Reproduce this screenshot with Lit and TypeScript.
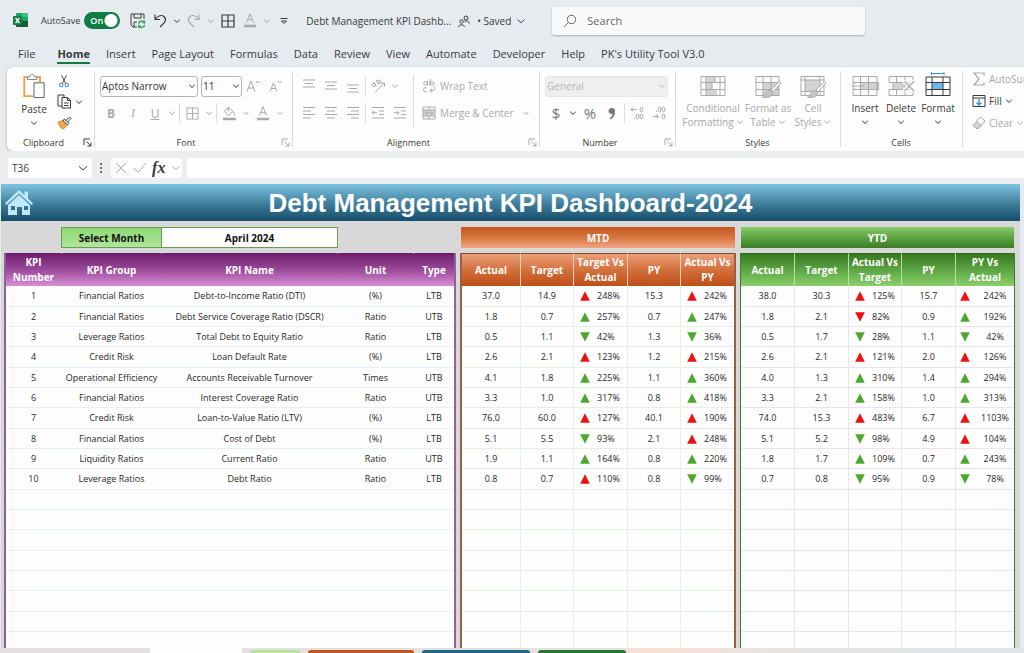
import { LitElement, html, css, svg, nothing } from "lit";
import { customElement, property } from "lit/decorators.js";
import { classMap } from "lit/directives/class-map.js";

type Trend = { dir: "up" | "down"; tone: "red" | "green"; value: string };
type Cell = string | Trend;
type Column = { title: string; width: number; centred?: boolean };

const trend = (code: string, value: string): Trend => ({
  tone: code[0] === "r" ? "red" : "green",
  dir: code[1] === "u" ? "up" : "down",
  value,
});

const KPI_COLUMNS: Column[] = [
  { title: "KPI Number", width: 56 },
  { title: "KPI Group", width: 100 },
  { title: "KPI Name", width: 176 },
  { title: "Unit", width: 76 },
  { title: "Type", width: 40 },
];
const MTD_COLUMNS: Column[] = [
  { title: "Actual", width: 59 },
  { title: "Target", width: 53 },
  { title: "Target Vs Actual", width: 54 },
  { title: "PY", width: 53 },
  { title: "Actual Vs PY", width: 53 },
];
const YTD_COLUMNS: Column[] = [
  { title: "Actual", width: 54 },
  { title: "Target", width: 54 },
  { title: "Actual Vs Target", width: 53 },
  { title: "PY", width: 54 },
  { title: "PY Vs Actual", width: 58, centred: true },
];

const KPI_ROWS: Cell[][] = [
  ["1", "Financial Ratios", "Debt-to-Income Ratio (DTI)", "(%)", "LTB"],
  ["2", "Financial Ratios", "Debt Service Coverage Ratio (DSCR)", "Ratio", "UTB"],
  ["3", "Leverage Ratios", "Total Debt to Equity Ratio", "Ratio", "LTB"],
  ["4", "Credit Risk", "Loan Default Rate", "(%)", "LTB"],
  ["5", "Operational Efficiency", "Accounts Receivable Turnover", "Times", "UTB"],
  ["6", "Financial Ratios", "Interest Coverage Ratio", "Ratio", "UTB"],
  ["7", "Credit Risk", "Loan-to-Value Ratio (LTV)", "(%)", "LTB"],
  ["8", "Financial Ratios", "Cost of Debt", "(%)", "LTB"],
  ["9", "Liquidity Ratios", "Current Ratio", "Ratio", "UTB"],
  ["10", "Leverage Ratios", "Debt Ratio", "Ratio", "LTB"],
];
const MTD_ROWS: Cell[][] = [
  ["37.0", "14.9", trend("ru", "248%"), "15.3", trend("ru", "242%")],
  ["1.8", "0.7", trend("gu", "257%"), "0.7", trend("gu", "247%")],
  ["0.5", "1.1", trend("gd", "42%"), "1.3", trend("gd", "36%")],
  ["2.6", "2.1", trend("ru", "123%"), "1.2", trend("ru", "215%")],
  ["4.1", "1.8", trend("gu", "225%"), "1.1", trend("gu", "360%")],
  ["3.3", "1.0", trend("gu", "317%"), "0.8", trend("gu", "418%")],
  ["76.0", "60.0", trend("ru", "127%"), "40.1", trend("ru", "190%")],
  ["5.1", "5.5", trend("gd", "93%"), "2.1", trend("ru", "248%")],
  ["1.9", "1.1", trend("gu", "164%"), "0.8", trend("gu", "220%")],
  ["0.8", "0.7", trend("ru", "110%"), "0.8", trend("gd", "99%")],
];
const YTD_ROWS: Cell[][] = [
  ["38.0", "30.3", trend("ru", "125%"), "15.7", trend("ru", "242%")],
  ["1.8", "2.1", trend("rd", "82%"), "0.9", trend("gu", "192%")],
  ["0.5", "1.7", trend("gd", "28%"), "1.1", trend("gd", "42%")],
  ["2.6", "2.1", trend("ru", "121%"), "2.0", trend("ru", "126%")],
  ["4.0", "1.3", trend("gu", "310%"), "1.4", trend("gu", "294%")],
  ["3.3", "2.1", trend("gu", "158%"), "1.0", trend("gu", "313%")],
  ["74.0", "15.3", trend("ru", "483%"), "6.7", trend("ru", "1103%")],
  ["5.1", "5.2", trend("gd", "98%"), "4.9", trend("ru", "104%")],
  ["1.8", "1.7", trend("gu", "109%"), "0.7", trend("gu", "243%")],
  ["0.7", "0.8", trend("gd", "95%"), "0.9", trend("gd", "78%")],
];

@customElement("kpi-table")
export class KpiTable extends LitElement {
  @property({ attribute: false }) columns: Column[] = [];
  @property({ attribute: false }) rows: Cell[][] = [];
  @property({ type: Number }) blank = 8;
  @property({ reflect: true }) tone = "purple";

  static styles = css`
    :host {
      display: block;
      box-sizing: border-box;
      border: 2px solid var(--edge);
      border-width: 0 2px;
      background: #fefefe;
      --edge: #93619a;
      --top: #641a63;
      --head: linear-gradient(#6e1f6d, #9c4a9b 50%, #d88fd6);
      --line: #e3f0f6;
      --rule: transparent;
      --divide: transparent;
    }
    :host([tone="orange"]) {
      --edge: #9a5f4a;
      --top: #7d4a2c;
      --head: linear-gradient(#eb9f7a, #d3703c 50%, #bd4f17);
      --line: #e3f2dc;
      --rule: #e3f2dc;
      --divide: #f6cdb6;
    }
    :host([tone="green"]) {
      border-width: 0 1px;
      --edge: #3b7d23;
      --top: #2f6a1a;
      --head: linear-gradient(#37781f, #5da544 50%, #8ad06c);
      --line: #f1e0f2;
      --rule: #f1e0f2;
      --divide: #b9dfa9;
    }
    table {
      width: 100%;
      table-layout: fixed;
      border-collapse: separate;
      border-spacing: 0;
      font-size: 9px;
      color: #262626;
    }
    th,
    td {
      box-sizing: border-box;
      padding: 0;
      text-align: center;
      vertical-align: middle;
      white-space: nowrap;
    }
    th {
      height: 33px;
      line-height: 15px;
      font-size: 10px;
      font-weight: 700;
      white-space: normal;
      color: #fff;
      background: var(--head);
      border-top: 1px solid var(--top);
      border-right: 1px solid var(--divide);
    }
    td {
      height: 20px;
      line-height: 16px;
      border-bottom: 1px solid var(--line);
      border-right: 1px solid var(--rule);
    }
    tr:nth-child(3n + 1) td {
      height: 21px;
    }
    th:last-child,
    td:last-child {
      border-right: 0;
    }
    .trend {
      display: flex;
      align-items: center;
      gap: 7px;
      padding-left: 6px;
    }
    .trend svg {
      flex: none;
    }
    .centred {
      gap: 6px;
      padding-left: 4px;
    }
    .centred span {
      flex: 1;
    }
    .red {
      fill: #ee1111;
    }
    .green {
      fill: #4ea72e;
    }
  `;

  private cell(c: Cell | undefined, col: Column) {
    if (c === undefined) return nothing;
    if (typeof c === "string") return c;
    return html`<div class=${classMap({ trend: true, centred: !!col.centred })}>
      <svg class=${c.tone} width="10" height="10" viewBox="0 0 10 10" aria-label=${c.dir}>
        <path d=${c.dir === "up" ? "M5 .3 9.800 9.800H.2Z" : "M5 9.700.2.2H9.800Z"}></path>
      </svg>
      <span>${c.value}</span>
    </div>`;
  }

  render() {
    const total = this.columns.reduce((n, c) => n + c.width, 0);
    const rows = [...this.rows, ...Array.from({ length: this.blank }, () => [] as Cell[])];
    return html`<table>
      <colgroup>
        ${this.columns.map((c) => html`<col style="width:${(c.width / total) * 100}%" />`)}
      </colgroup>
      <thead>
        <tr>
          ${this.columns.map((c) => html`<th scope="col">${c.title}</th>`)}
        </tr>
      </thead>
      <tbody>
        ${rows.map((r) => html`<tr>${this.columns.map((c, i) => html`<td>${this.cell(r[i], c)}</td>`)}</tr>`)}
      </tbody>
    </table>`;
  }
}

const chevron = (size = 8) => html`<svg class="chev" width=${size} height=${size} viewBox="0 0 8 8">
  <path d="M1.200 2.800 4 5.400 6.800 2.800" vector-effect="non-scaling-stroke"></path>
</svg>`;

const launcher = html`<svg width="9" height="9" viewBox="0 0 9 9">
  <path d="M1 7V1h6M3.500 3.500 8 8M8 4.500V8H4.500"></path>
</svg>`;

const lines = (y: number, spans: number[][]) => html`<svg width="14" height="14" viewBox="0 0 14 14">
  ${spans.map(([a, b], i) => svg`<path d="M${a} ${y + i * 3.5}H${b}"></path>`)}
</svg>`;

const indentIcon = (out: boolean) => html`<svg width="14" height="14" viewBox="0 0 14 14">
  <path d="M1 1.500H13M8 5H13M8 8.500H13M1 12H13"></path>
  <path d=${out ? "M6 6.700H1M3 4.700 1 6.700 3 8.700" : "M1 6.700H6M4 4.700 6 6.700 4 8.700"}></path>
</svg>`;

const gridIcon = (size: number) => html`<svg width=${size} height=${size} viewBox="0 0 14 14">
  <path d="M1 1H13V13H1ZM7 1V13M1 7H13"></path>
</svg>`;

const brush = svg`<path class="paper" d="M24.500 6.500 16 15 18 17 26 8Z"></path>
  <path class="tip" d="M15 15 18 17.500C17 22 12 23.500 7.500 22C10.500 21 10 16 15 15Z"></path>`;

const condIcon = html`<svg width="26" height="24" viewBox="0 0 26 24">
  <path class="solid" d="M6 1.500H15V7.500H6ZM6 14.500H17V20.500H6ZM6 7.500H12V14.500H6Z"></path>
  <path d="M1 1.500H25V20.500H1ZM1 7.500H25M1 14.500H25M6 1.500V20.500M15 1.500V7.500M20 1.500V20.500M12 7.500V14.500"></path>
</svg>`;
const tableIcon = html`<svg width="27" height="24" viewBox="0 0 27 24">
  <path class="solid" d="M8 7.500H24V20.500H8Z"></path>
  <path d="M1 1.500H24V20.500H1ZM1 7.500H24M1 14.500H24M8 1.500V20.500M16 1.500V20.500"></path>
  ${brush}
</svg>`;
const cellStyleIcon = html`<svg width="27" height="24" viewBox="0 0 27 24">
  <path class="solid" d="M5 5H20V16.500H5Z"></path>
  <path d="M1 1.500H24V20.500H1ZM1 5H24M1 16.500H24M5 1.500V20.500M20 1.500V20.500"></path>
  ${brush}
</svg>`;
const insertIcon = html`<svg class="dim" width="28" height="24" viewBox="0 0 28 24">
  <path d="M2 1.500H26V20.500H2ZM2 7.500H26M2 14.500H26M9.500 1.500V20.500M17.500 1.500V20.500"></path>
  <path class="paper" stroke="none" d="M0 8.500H9V13.500H0Z"></path>
  <path class="solid" d="M9.500 7.500H27.500V14.500H9.500Z"></path>
  <path d="M9.500 7.500H27.500V14.500H9.500ZM13 11H1M5 7 1 11 5 15"></path>
</svg>`;
const deleteIcon = html`<svg class="dim" width="28" height="24" viewBox="0 0 28 24">
  <path d="M2 1.500H26V7.500H2ZM2 14.500H26V20.500H2ZM9.500 1.500V7.500M18 1.500V7.500M9.500 14.500V20.500M18 14.500V20.500"></path>
  <path class="solid" d="M6 7.500H18V14.500H6Z"></path>
  <path d="M6 7.500H18V14.500H6Z"></path>
  <path d="M17 6 27 16M27 6 17 16" stroke="#fdfdfd" stroke-width="4"></path>
  <path d="M17.500 6.500 27 16M27 6.500 17.500 16" stroke-width="1.400"></path>
</svg>`;
const formatIcon = html`<svg width="26" height="24" viewBox="0 0 26 24">
  <path class="blue" d="M6.500 -1.500H19M6.500 -3V0M19 -3V0"></path>
  <path class="fillblue" d="M7 7.500H18V14.500H7Z"></path>
  <path d="M1 2H25V20.500H1ZM1 7.500H25M1 14.500H25M7 2V20.500M18 2V20.500"></path>
</svg>`;

const TABS = [
  "File", "Home", "Insert", "Page Layout", "Formulas", "Data", "Review",
  "View", "Automate", "Developer", "Help", "PK's Utility Tool V3.0",
];

@customElement("app-root")
export class AppRoot extends LitElement {
  static styles = css`
    :host {
      display: flex;
      flex-direction: column;
      height: 100vh;
      overflow: hidden;
      background: #e6ebef;
      font-family: "Open Sans", "Noto Sans", sans-serif;
      font-size: 10px;
      color: #3a3a3a;
    }
    * {
      box-sizing: border-box;
    }
    button,
    select,
    input {
      margin: 0;
      padding: 0;
      border: 0;
      background: none;
      font: inherit;
      color: inherit;
      appearance: none;
      outline: none;
    }
    button {
      display: inline-flex;
      align-items: center;
      justify-content: center;
      flex: none;
    }
    svg {
      display: block;
      flex: none;
      fill: none;
      stroke: currentColor;
      overflow: visible;
    }
    .flat {
      fill: currentColor;
      stroke: none;
    }
    .solid {
      fill: currentColor;
      fill-opacity: 0.5;
      stroke: none;
    }
    .paper {
      fill: #fdfdfd;
    }
    .tip {
      fill: #c4c4c4;
    }
    .dim {
      color: #a9a9a9;
    }

    .titlebar {
      display: flex;
      align-items: center;
      flex: none;
      height: 41px;
      padding-left: 13px;
    }
    .autosave {
      display: flex;
      align-items: center;
      gap: 4px;
      margin-left: 13px;
      font-size: 9px;
    }
    .toggle {
      display: grid;
      align-items: center;
    }
    .toggle > * {
      grid-area: 1 / 1;
    }
    .toggle input {
      width: 36px;
      height: 17px;
      border-radius: 9px;
      background: radial-gradient(circle at 27px 50%, #fff 6px, #107c41 7px);
    }
    .toggle span {
      padding-left: 6px;
      color: #fff;
      font-weight: 600;
    }
    .quick {
      display: flex;
      align-items: center;
      margin-left: 8px;
    }
    .quick button {
      width: 20px;
      height: 22px;
      margin-right: 2px;
    }
    .quick .slim {
      width: 10px;
    }
    .quick .customize {
      margin-left: 5px;
    }
    .doc {
      margin-left: 15px;
      white-space: nowrap;
    }
    .share {
      margin: 0 7px;
    }
    .saved {
      gap: 5px;
      white-space: nowrap;
    }
    .search {
      display: flex;
      align-items: center;
      flex: 0 1 313px;
      gap: 10px;
      height: 28px;
      margin-left: 26px;
      padding-left: 11px;
      border-radius: 3px;
      background: #fafafa;
      box-shadow: 0 1px 2px #0004;
      color: #666;
    }
    .search input {
      flex: 1;
      min-width: 0;
      font-size: 11px;
    }
    .search input::placeholder {
      color: #666;
      opacity: 1;
    }

    .tabs {
      display: flex;
      flex: none;
      gap: 16px;
      height: 26px;
      padding-left: 18px;
      font-size: 11px;
      line-height: 16px;
    }
    .tabs button {
      height: 23px;
      padding-top: 4px;
      white-space: nowrap;
      border-bottom: 2px solid transparent;
    }
    .tabs button:first-child {
      margin-right: 6px;
    }
    .tabs .active {
      font-weight: 700;
      border-color: #107c41;
    }

    .ribbon {
      display: flex;
      flex: none;
      height: 84px;
      margin-left: 7px;
      border-radius: 6px 0 0 6px;
      background: #fdfdfd;
      box-shadow: 0 1px 3px #0004;
      overflow: hidden;
    }
    .group {
      display: flex;
      flex-direction: column;
      flex: none;
      padding: 8px 0 0 6px;
    }
    .group + .group {
      background: linear-gradient(#dcdcdc, #dcdcdc) 0 4px / 1px 76px no-repeat;
    }
    .body {
      display: flex;
      flex: 1 1 0;
      min-height: 0;
    }
    .foot {
      display: flex;
      align-items: center;
      flex: none;
      height: 17px;
      margin-left: -6px;
      font-size: 9px;
    }
    .foot button {
      width: 14px;
    }
    .foot span {
      flex: 1;
      text-align: center;
    }
    .clipboard {
      width: 87px;
      padding-top: 3px;
    }
    .font {
      width: 198px;
    }
    .alignment {
      width: 247px;
    }
    .number {
      width: 136px;
    }
    .styles {
      width: 165px;
    }
    .cells {
      width: 122px;
    }
    .rows {
      display: flex;
      flex-direction: column;
      gap: 5px;
    }
    .row {
      display: flex;
      align-items: center;
      height: 22px;
    }
    .row button {
      width: 22px;
      height: 22px;
    }
    .row .slim {
      width: 12px;
    }
    .row .wide {
      width: auto;
      gap: 4px;
    }
    .row .wide + .slim {
      margin-left: 6px;
    }
    .sep {
      flex: none;
      width: 1px;
      height: 20px;
      margin: 0 1px;
      background: #dcdcdc;
    }
    .sep.tall {
      height: 52px;
      margin: 0 8px 0 2px;
    }
    .glyph {
      font-size: 12px;
    }
    .serif {
      font-family: "Liberation Serif", serif;
      font-style: italic;
    }
    .under {
      text-decoration: underline;
    }
    .bold {
      font-weight: 700;
    }
    .big {
      font-size: 15px;
      color: #777;
    }
    .combo {
      display: grid;
      align-items: center;
      height: 21px;
      margin-right: 3px;
      border: 1px solid #b4b4b4;
      border-radius: 3px;
      color: #333;
    }
    .combo > * {
      grid-area: 1 / 1;
    }
    .combo .chev {
      justify-self: end;
      margin-right: 1px;
    }
    .combo select {
      width: 100%;
      padding-left: 1px;
    }
    .family {
      width: 98px;
    }
    .size {
      width: 41px;
      margin-right: 0;
    }
    .format {
      width: 123px;
      background: #efefef;
      border-color: #e6e6e6;
      color: #b4b4b4;
    }
    .tool {
      display: flex;
      flex-direction: column;
      align-items: center;
      justify-content: flex-start;
      line-height: 14px;
    }
    .tool > svg:first-child {
      margin-bottom: 2px;
    }
    .tool > .chev {
      margin-top: 3px;
    }
    .tool .inline {
      display: flex;
      align-items: center;
      gap: 2px;
    }
    .tool.w58 {
      width: 58px;
    }
    .tool.w52 {
      width: 52px;
    }
    .tool.w38 {
      width: 38px;
    }
    .tool.w36 {
      width: 36px;
    }
    .styles .body {
      padding-left: 3px;
    }
    .cells .body {
      padding-left: 1px;
    }
    .blue {
      stroke: #2f8fd8;
    }
    .fillblue {
      fill: #6db8f2;
      stroke: none;
    }
    .paste {
      width: 42px;
      padding-top: 3px;
    }
    .clips {
      display: flex;
      flex-direction: column;
    }
    .clips div {
      display: flex;
      align-items: center;
      height: 21px;
    }
    .clips button {
      width: 18px;
    }
    .clips .slim {
      width: 12px;
    }
    .editing {
      padding: 1px 0 0 10px;
    }
    .editing button {
      justify-content: flex-start;
      gap: 3px;
      height: 22px;
      white-space: nowrap;
    }
    .editing .body {
      flex-direction: column;
      align-items: flex-start;
    }

    .formula {
      display: flex;
      align-items: center;
      flex: none;
      height: 33px;
      padding-left: 8px;
      background: #ebedef;
    }
    .box {
      display: flex;
      align-items: center;
      height: 20px;
      border-radius: 3px;
      background: #fff;
    }
    .name {
      width: 84px;
      padding: 0 3px 0 4px;
    }
    .name input {
      flex: 1;
      min-width: 0;
    }
    .dots {
      width: 19px;
      stroke: none;
      fill: #444;
    }
    .fx {
      width: 71px;
      margin-right: 5px;
      padding: 0 1px 0 4px;
      justify-content: space-between;
    }
    .fx .serif {
      font-size: 16px;
    }
    .entry {
      flex: 1;
      min-width: 0;
    }

    .sheet {
      display: flex;
      flex-direction: column;
      flex: 1;
      min-height: 0;
      margin: 0 4px 0 1px;
      background: #d8d8d8;
      overflow: hidden;
    }
    .banner {
      display: flex;
      align-items: center;
      flex: none;
      height: 37px;
      padding: 0 32px 0 4px;
      background: linear-gradient(#7dc4e4, #43829f 50%, #154d69);
      color: #fff;
    }
    .banner h1 {
      flex: 1;
      margin: 0;
      text-align: center;
      font: 700 26px/32px "Liberation Sans", Arial, sans-serif;
      white-space: nowrap;
    }
    .banner a {
      color: #bfe9fc;
    }
    .bands,
    .tables {
      display: grid;
      grid-template-columns: 452fr 276fr 275fr;
      padding: 0 5px 0 3px;
    }
    .bands {
      flex: none;
      column-gap: 4px;
      margin: 6px 0 5px;
      height: 21px;
      font-weight: 700;
    }
    .tables {
      flex: 1;
      min-height: 0;
      column-gap: 4px;
      overflow: hidden;
    }
    .month {
      display: grid;
      grid-template-columns: 57fr 101fr 176fr 118fr;
    }
    .month label,
    .month select {
      display: grid;
      place-items: center;
      border: 1px solid #6a9c56;
      color: #111;
    }
    .month label {
      grid-column: 2;
      background: linear-gradient(#8ed973, #b1e59e);
    }
    .month select {
      border-left: 0;
      background: #fff;
      text-align: center;
      text-align-last: center;
      font-weight: 700;
    }
    .band {
      display: grid;
      place-items: center;
      margin: 0 1px;
      color: #fff;
    }
    .mtd {
      background: linear-gradient(#c4571d, #d8753f 50%, #efa583);
    }
    .ytd {
      background: linear-gradient(#86cc68, #5ea345 50%, #3b7d23);
    }

    .sheets {
      display: flex;
      align-items: flex-end;
      flex: none;
      height: 5px;
      background: linear-gradient(90deg, #e4e1e0 60%, #f8dfd4 62%, #e4e4e4 80%, #dfe5ea);
    }
    .sheets button {
      height: 3px;
      margin-right: 8px;
      border-radius: 3px 3px 0 0;
    }
    .sheets .current {
      width: 92px;
      height: 5px;
      margin-left: 150px;
      background: #fefefe;
      border-radius: 0;
    }
    .sheets .s1 {
      width: 50px;
      background: #b5e3a0;
    }
    .sheets .s2 {
      width: 106px;
      background: #bf5622;
    }
    .sheets .s3 {
      width: 108px;
      background: #1f6788;
    }
    .sheets .s4 {
      width: 88px;
      background: #27762f;
    }
  `;

  private foot(label: string, mode: "" | "on" | "dim" = "") {
    return html`<div class="foot">
      <span>${label}</span>
      ${mode ? html`<button class=${mode} aria-label="${label} settings">${launcher}</button>` : nothing}
    </div>`;
  }

  private drop(label: string) {
    return html`<button class="slim" aria-label=${label}>${chevron()}</button>`;
  }

  private titlebar() {
    return html`<header class="titlebar">
      <svg class="flat" width="15" height="15" viewBox="0 0 15 15">
        <rect x="3" y="0" width="12" height="14" rx="1" fill="#21a366"></rect>
        <path d="M9 0h5a1 1 0 0 1 1 1v3H9Z" fill="#33c481"></path>
        <path d="M3 8h12v5a1 1 0 0 1-1 1H4a1 1 0 0 1-1-1Z" fill="#185c37"></path>
        <rect x="0" y="3" width="9" height="9" rx="1" fill="#107c41"></rect>
        <path d="M2.600 5 6.400 10M6.400 5 2.600 10" stroke="#fff" stroke-width="1.300"></path>
      </svg>
      <div class="autosave">
        <span id="as">AutoSave</span>
        <label class="toggle"><input type="checkbox" checked aria-labelledby="as" /><span>On</span></label>
      </div>
      <div class="quick">
        <button aria-label="Save">
          <svg width="16" height="16" viewBox="0 0 16 16">
            <path d="M7 14H3L1 12V1H14V6M4 1V5H11V1M4 14V9H7"></path>
            <path d="M8.500 10.500A3.300 3.300 0 0 1 14.500 9.500V7.500M14.500 9.500H12.500M14.700 12A3.300 3.300 0 0 1 8.800 13V15M8.800 13H10.800" stroke="#2da55d" stroke-width="1.400"></path>
          </svg>
        </button>
        <button aria-label="Undo">
          <svg width="16" height="16" viewBox="0 0 16 16">
            <path d="M3 1.500V6.500H8M3 6.500C6 2.500 9.500 1.500 12 3.500C14.500 6 13.500 8.500 11.500 10.500L8 14" stroke-width="1.200"></path>
          </svg>
        </button>
        ${this.drop("Undo history")}
        <button class="dim" aria-label="Redo">
          <svg width="16" height="16" viewBox="0 0 16 16">
            <path d="M13 1.500V6.500H8M13 6.500C10 2.500 6.500 1.500 4 3.500C1.500 6 2.500 8.500 4.500 10.500L8 14" stroke-width="1.200"></path>
          </svg>
        </button>
        <span class="dim">${this.drop("Redo history")}</span>
        <button aria-label="Borders">
          <svg width="14" height="14" viewBox="0 0 14 14">
            <path d="M1 1H13V13H1ZM7 1V13M1 7H13" stroke-width="1.200"></path>
          </svg>
        </button>
        <button class="dim" aria-label="Font colour">${this.fontColour()}</button>
        <span class="dim">${this.drop("Font colours")}</span>
        <button class="slim customize" aria-label="Customize">
          <svg width="8" height="8" viewBox="0 0 8 8"><path d="M.500 1.500H7.500M1.500 4 4 6.500 6.500 4Z"></path></svg>
        </button>
      </div>
      <span class="doc">Debt Management KPI Dashb...</span>
      <button class="share" aria-label="Share">
        <svg width="12" height="12" viewBox="0 0 12 12">
          <circle cx="8" cy="3" r="2"></circle><circle cx="3.500" cy="6.500" r="1.700"></circle>
          <path d="M.600 12C.800 9 6 9 6.400 12M6.500 6.300C9 5.300 11 6.300 11.300 8.500"></path>
        </svg>
      </button>
      <button class="saved">• Saved ${chevron(10)}</button>
      <label class="search">
        <svg width="14" height="14" viewBox="0 0 14 14">
          <circle cx="8.500" cy="5.500" r="4.200"></circle><path d="M5.400 8.600 1 13"></path>
        </svg>
        <input type="search" placeholder="Search" aria-label="Search" />
      </label>
    </header>`;
  }

  private fontColour() {
    return html`<svg width="14" height="15" viewBox="0 0 14 15">
      <path d="M3.500 9.500 7 .800 10.500 9.500M4.600 6.700H9.400"></path>
      <path d="M1 13H13" stroke-width="2.600"></path>
    </svg>`;
  }

  private ribbon() {
    return html`<section class="ribbon">
      <div class="group clipboard">
        <div class="body">
          <button class="tool paste">
            <svg width="24" height="27" viewBox="0 0 26 28">
              <path d="M7 3.500H2.500V24.500H12M15 3.500H19.500V9" stroke="#f0a03c" stroke-width="2"></path>
              <path d="M6 6.500V3.500H8.500C9 0 13 0 13.500 3.500H16V6.500Z" fill="#fff" stroke="#777"></path>
              <path d="M13 10H24V26H13Z" fill="#fff" stroke="#555"></path>
            </svg>
            <span>Paste</span>${chevron()}
          </button>
          <div class="clips">
            <div>
              <button aria-label="Cut">
                <svg width="12" height="14" viewBox="0 0 12 14">
                  <path d="M3.500 1 7.500 9.500M8.500 1 4.500 9.500" stroke="#555"></path>
                  <circle cx="3.200" cy="11" r="1.800" stroke="#2b8ad0"></circle>
                  <circle cx="8.800" cy="11" r="1.800" stroke="#2b8ad0"></circle>
                </svg>
              </button>
            </div>
            <div>
              <button aria-label="Copy">
                <svg width="15" height="15" viewBox="0 0 15 15">
                  <path d="M5 12H1V1H7V3"></path>
                  <path d="M5 3.500H10.500L13.500 6.500V14H5ZM10.500 3.500V6.500H13.500M7 9H11.500M7 11.500H11.500"></path>
                </svg>
              </button>
              ${this.drop("Copy options")}
            </div>
            <div>
              <button aria-label="Format Painter">
                <svg width="15" height="14" viewBox="0 0 15 14">
                  <path d="M1 6 6 4.500 10.500 8.800 6.500 13C4 12.500 3 11 1 6Z" fill="#f3a84a" stroke="#d98a2a"></path>
                  <path class="paper" d="M6 4.500 7.500 3 12 7.300 10.500 8.800ZM9 4.500 12.500 1 14 2.500 10.500 6"></path>
                </svg>
              </button>
            </div>
          </div>
        </div>
        ${this.foot("Clipboard", "on")}
      </div>

      <div class="group font">
        <div class="body rows">
          <div class="row">
            <div class="combo family"><select aria-label="Font"><option>Aptos Narrow</option></select>${chevron()}</div>
            <div class="combo size"><select aria-label="Font size"><option>11</option></select>${chevron()}</div>
            <button class="dim" aria-label="Grow font">
              <svg width="14" height="14" viewBox="0 0 14 14"><path d="M1 12.500 5 2 9 12.500M2.400 9H7.600M10 4 11.700 2 13.400 4"></path></svg>
            </button>
            <button class="dim" aria-label="Shrink font">
              <svg width="14" height="14" viewBox="0 0 14 14"><path d="M2 12.500 5.500 4 9 12.500M3.300 9.500H7.700M10 2 11.700 4 13.400 2"></path></svg>
            </button>
          </div>
          <div class="row dim">
            <button class="glyph bold">B</button>
            <button class="glyph serif">I</button>
            <button class="glyph under">U</button>
            ${this.drop("Underline styles")}
            <i class="sep"></i>
            <button aria-label="Borders">${gridIcon(13)}</button>
            ${this.drop("Border styles")}
            <i class="sep"></i>
            <button aria-label="Fill colour">
              <svg width="15" height="15" viewBox="0 0 15 15">
                <path d="M6.500 1 11 5.500 6.500 9.500 2.500 5.500ZM6.500 1V5M11.500 6C13 8 13 9 12 9.500"></path>
                <path d="M1 13H14" stroke-width="2.600"></path>
              </svg>
            </button>
            ${this.drop("Fill colours")}
            <button aria-label="Font colour">${this.fontColour()}</button>
            ${this.drop("Font colours")}
          </div>
        </div>
        ${this.foot("Font", "dim")}
      </div>

      <div class="group alignment">
        <div class="body dim">
          <div class="rows">
            <div class="row">
              <button aria-label="Top align">${lines(1, [[1, 13], [3, 11], [1, 13]])}</button>
              <button aria-label="Middle align">${lines(3, [[1, 13], [3, 11], [1, 13]])}</button>
              <button aria-label="Bottom align">${lines(6, [[1, 13], [3, 11], [1, 13]])}</button>
              <i class="sep"></i>
              <button aria-label="Orientation">
                <svg width="15" height="14" viewBox="0 0 15 14">
                  <path d="M4 13.500 13.500 4M10 4H13.500V7.500"></path>
                  <circle cx="3" cy="6" r="1.700"></circle><path d="M2.500 3 5.500 7.500M5 .500 8.500 5.500"></path>
                  <circle cx="8" cy="2.800" r="1.700"></circle>
                </svg>
              </button>
              ${this.drop("Orientation options")}
            </div>
            <div class="row">
              <button aria-label="Align left">${lines(1.5, [[1, 13], [1, 9], [1, 13], [1, 9]])}</button>
              <button aria-label="Centre">${lines(1.5, [[1, 13], [3, 11], [1, 13], [3, 11]])}</button>
              <button aria-label="Align right">${lines(1.5, [[1, 13], [5, 13], [1, 13], [5, 13]])}</button>
              <i class="sep"></i>
              <button aria-label="Decrease indent">${indentIcon(true)}</button>
              <button aria-label="Increase indent">${indentIcon(false)}</button>
            </div>
          </div>
          <i class="sep tall"></i>
          <div class="rows">
            <div class="row">
              <button class="wide">
                <svg width="14" height="14" viewBox="0 0 14 14">
                  <circle cx="3.500" cy="4.300" r="1.800"></circle><path d="M5.500 2V6.500M8 0V6.500"></path>
                  <circle cx="10" cy="4.300" r="1.800"></circle>
                  <path d="M5 9A2.200 2.200 0 1 0 5 12.500M11.500 7.500C14 8.500 13 11.500 11 11.500H8M9.800 9.500 8 11.500 9.800 13.500"></path>
                </svg>
                Wrap Text
              </button>
            </div>
            <div class="row">
              <button class="wide">
                <svg width="14" height="14" viewBox="0 0 14 14">
                  <path class="solid" d="M1 4H13V10H1Z"></path>
                  <path d="M1 1H13V13H1ZM1 4H13M1 10H13M7 1V4M7 10V13M3 7H11M4.500 5.500 3 7 4.500 8.500M9.500 5.500 11 7 9.500 8.500"></path>
                </svg>
                Merge &amp; Center
              </button>
              ${this.drop("Merge options")}
            </div>
          </div>
        </div>
        ${this.foot("Alignment", "dim")}
      </div>

      <div class="group number">
        <div class="body rows">
          <div class="row">
            <div class="combo format"><select aria-label="Number format"><option>General</option></select>${chevron()}</div>
          </div>
          <div class="row">
            <button class="big">$</button>
            ${this.drop("Currencies")}
            <button class="big">%</button>
            <button aria-label="Comma style">
              <svg class="flat" width="8" height="13" viewBox="0 0 8 13">
                <path d="M4 1A3 3 0 1 0 4.500 6.800C4.500 9 3 10.500 1.500 11.500L2.500 12.500C5.500 11 7 8 7 4.500A3.200 3.200 0 0 0 4 1Z" fill="#777"></path>
              </svg>
            </button>
            <i class="sep"></i>
            <button class="dim" aria-label="Increase decimal">${this.decimals(true)}</button>
            <button class="dim" aria-label="Decrease decimal">${this.decimals(false)}</button>
          </div>
        </div>
        ${this.foot("Number", "dim")}
      </div>

      <div class="group styles">
        <div class="body dim">
          <button class="tool w58">${condIcon}<span>Conditional</span><span class="inline">Formatting ${chevron()}</span></button>
          <button class="tool w52">${tableIcon}<span>Format as</span><span class="inline">Table ${chevron()}</span></button>
          <button class="tool w38">${cellStyleIcon}<span>Cell</span><span class="inline">Styles ${chevron()}</span></button>
        </div>
        ${this.foot("Styles")}
      </div>

      <div class="group cells">
        <div class="body">
          <button class="tool w36">${insertIcon}<span>Insert</span>${chevron()}</button>
          <button class="tool w36">${deleteIcon}<span>Delete</span>${chevron()}</button>
          <button class="tool w38">${formatIcon}<span>Format</span>${chevron()}</button>
        </div>
        ${this.foot("Cells")}
      </div>

      <div class="group editing">
        <div class="body">
          <button class="dim">
            <svg width="14" height="14" viewBox="0 0 14 14"><path d="M12 3.500V1H2L7 7 2 13H12V10.500" stroke-width="1.200"></path></svg>
            AutoSum
          </button>
          <button>
            <svg width="14" height="14" viewBox="0 0 14 14">
              <path d="M1 1.500H13V12.500H1ZM1 4H13"></path>
              <path class="blue" d="M7 5V11M4.500 8.500 7 11 9.500 8.500" stroke-width="1.300"></path>
            </svg>
            Fill ${chevron()}
          </button>
          <button class="dim">
            <svg width="14" height="14" viewBox="0 0 14 14">
              <path d="M8.500 1 13 5 6.500 12.500H4L1 9.500ZM4.500 5.500 9.500 9.500"></path>
              <path class="solid" d="M4.500 5.500 9.500 9.500 6.500 12.500H4L1 9.500Z"></path>
            </svg>
            Clear ${chevron()}
          </button>
        </div>
      </div>
    </section>`;
  }

  private decimals(more: boolean) {
    const zero = (x: number, y: number) => svg`<ellipse cx=${x} cy=${y} rx="1.400" ry="2.300"></ellipse>`;
    return html`<svg width="15" height="14" viewBox="0 0 15 14">
      ${more
        ? svg`<path d="M6.500 3.500H1M3 1.500 1 3.500 3 5.500M4.500 12V13"></path>${zero(11.5, 3.5)}${zero(7.5, 10.5)}${zero(11.5, 10.5)}`
        : svg`<path d="M1 10.500H6.500M4.500 8.500 6.500 10.500 4.500 12.500M4.500 5V6"></path>${zero(7.5, 3.5)}${zero(11.5, 3.5)}${zero(11.5, 10.5)}`}
    </svg>`;
  }

  private formulaBar() {
    return html`<div class="formula">
      <div class="box name"><input value="T36" aria-label="Name box" />${chevron(12)}</div>
      <svg class="dots" height="12" viewBox="0 0 19 12">
        <circle cx="9" cy="2" r="1"></circle><circle cx="9" cy="6" r="1"></circle><circle cx="9" cy="10" r="1"></circle>
      </svg>
      <div class="box fx">
        <button class="dim" aria-label="Cancel">
          <svg width="12" height="12" viewBox="0 0 12 12"><path d="M1 1 11 11M11 1 1 11"></path></svg>
        </button>
        <button class="dim" aria-label="Enter">
          <svg width="14" height="12" viewBox="0 0 14 12"><path d="M1 6 5 10.500 13 1"></path></svg>
        </button>
        <button class="serif bold">fx</button>
        <span class="dim">${chevron(10)}</span>
      </div>
      <input class="box entry" aria-label="Formula" />
    </div>`;
  }

  render() {
    return html`
      ${this.titlebar()}
      <nav class="tabs">
        ${TABS.map((t) => html`<button class=${classMap({ active: t === "Home" })}>${t}</button>`)}
      </nav>
      ${this.ribbon()} ${this.formulaBar()}
      <main class="sheet">
        <div class="banner">
          <a href="#home" aria-label="Home">
            <svg class="flat" width="28" height="28" viewBox="0 0 28 28">
              <path d="M14 1 19.500 6.200V2.500H23V9.500L28 14.200 26.500 16 14 4.300 1.500 16 0 14.200Z"></path>
              <path fill-rule="evenodd" d="M14 6 25 16V26H17V18H12V26H3V16ZM6 17V21H10V17ZM19 17V21H23V17Z"></path>
            </svg>
          </a>
          <h1>Debt Management KPI Dashboard-2024</h1>
        </div>
        <div class="bands">
          <div class="month">
            <label for="month">Select Month</label>
            <select id="month"><option>April 2024</option></select>
          </div>
          <div class="band mtd">MTD</div>
          <div class="band ytd">YTD</div>
        </div>
        <div class="tables">
          <kpi-table tone="purple" .columns=${KPI_COLUMNS} .rows=${KPI_ROWS}></kpi-table>
          <kpi-table tone="orange" .columns=${MTD_COLUMNS} .rows=${MTD_ROWS}></kpi-table>
          <kpi-table tone="green" .columns=${YTD_COLUMNS} .rows=${YTD_ROWS}></kpi-table>
        </div>
      </main>
      <nav class="sheets">
        <button class="current" aria-label="Sheet 1"></button>
        <button class="s1" aria-label="Sheet 2"></button>
        <button class="s2" aria-label="Sheet 3"></button>
        <button class="s3" aria-label="Sheet 4"></button>
        <button class="s4" aria-label="Sheet 5"></button>
      </nav>
    `;
  }
}
